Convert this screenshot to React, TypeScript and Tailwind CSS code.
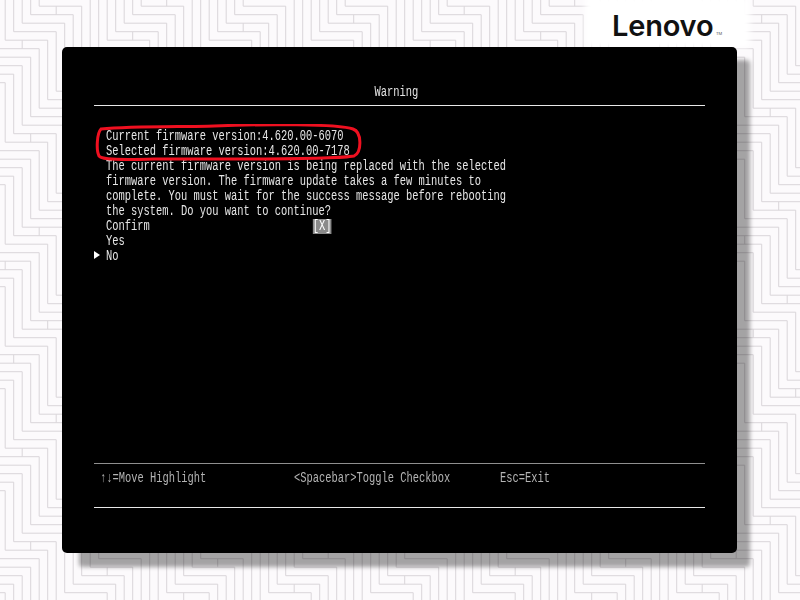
const rows = [
  'Current firmware version:4.620.00-6070',
  'Selected firmware version:4.620.00-7178',
  'The current firmware version is being replaced with the selected',
  'firmware version. The firmware update takes a few minutes to',
  'complete. You must wait for the success message before rebooting',
  'the system. Do you want to continue?',
];

// nested staircase lines, 5 units across and 7 down, repeating every 12 units
const U = 8.5;
function wallPath() {
  let d = '';
  for (let k = -120; k < 120; k++) {
    let x = 761.7 + k * U;
    let y = 201.7 - k * U;
    while (x > -60 && y > -60) {
      x -= 5 * U;
      y -= 7 * U;
    }
    d += `M${x} ${y}`;
    while (x < 860 && y < 660) {
      x += 5 * U;
      d += `H${x}`;
      if (((k % 4) + 4) % 4 === 0) d += `M${x - 3 * U} ${y}V${y + U}M${x} ${y}`;
      y += 7 * U;
      d += `V${y}`;
    }
  }
  return d;
}

// herringbone wall behind the bios window
function Wall() {
  return (
    <svg className="absolute inset-0" width="800" height="600">
      <rect width="800" height="600" fill="#fcfafc" />
      <path d={wallPath()} fill="none" stroke="#d9d5d9" strokeWidth="1" />
    </svg>
  );
}

export default function App() {
  return (
    <div className="relative w-[800px] h-[600px] overflow-hidden bg-[#fcfafc] font-['Liberation_Mono',monospace]">
      <Wall />

      {/* logo patch */}
      <div className="absolute left-[585px] top-[-4px] w-[165px] h-[52px] bg-white blur-[3px]" />
      <div className="absolute left-[612px] top-[8px] text-[29px] leading-[36px] font-semibold tracking-[-0.2px] text-[#111] font-['Inter',sans-serif]">
        Lenovo
      </div>
      <div className="absolute left-[716px] top-[31px] text-[4px] leading-[5px] text-[#555] font-['Inter',sans-serif]">TM</div>

      {/* drop shadow */}
      <div className="absolute left-[79px] top-[60px] w-[671px] h-[507px] bg-black/35 blur-[2px] rounded-sm" />

      <div className="absolute left-[62px] top-[47px] w-[675px] h-[506px] bg-black rounded-[5px] flex flex-col px-8 text-[#e6e6e6] text-[14px] leading-[15px]">
        <div className="h-[59px] border-b border-[#e8e8e8] flex items-end justify-center pb-[5px] pr-[6px]">
          <span className="scale-x-[0.744]">Warning</span>
        </div>

        <div className="relative mt-[23px] h-[135px] whitespace-pre">
          <div className="absolute left-[12px] top-0 origin-left scale-x-[0.744]">
            {rows.map((r) => (
              <div key={r} className="h-[15px]">{r}</div>
            ))}
            <div className="flex h-[15px]">
              <span className="w-[278px]">Confirm</span>
              <span className="bg-[#8a8a8a] text-white">[X]</span>
            </div>
            <div className="h-[15px]">Yes</div>
            <div className="h-[15px]">No</div>
          </div>

          <span className="absolute left-0 top-[122px] w-0 h-0 border-y-[4px] border-y-transparent border-l-[6px] border-l-white" />

          {/* red marker round the versions */}
          <svg className="absolute left-0 top-[-5px]" width="272" height="40" fill="none">
            <path
              d="M7 5C40 2 90 3 120 2C170 0 245 0 259 5C268 8 268 28 260 32C240 36 120 35 60 35C30 36 8 36 5 32C2 26 3 9 7 5Z"
              stroke="#ef1020"
              strokeWidth="3"
            />
          </svg>
        </div>

        <div className="mt-[199px] border-t border-[#8f8f8f] h-[44px] pt-[7px] pl-[6px] text-[#b4b4b4] whitespace-pre">
          <div className="flex origin-left scale-x-[0.744]">
            <span className="w-[261px]">↑↓=Move Highlight</span>
            <span className="w-[277px]">&lt;Spacebar&gt;Toggle Checkbox</span>
            <span>Esc=Exit</span>
          </div>
        </div>
        <div className="border-t border-[#e8e8e8]" />
      </div>
    </div>
  );
}
